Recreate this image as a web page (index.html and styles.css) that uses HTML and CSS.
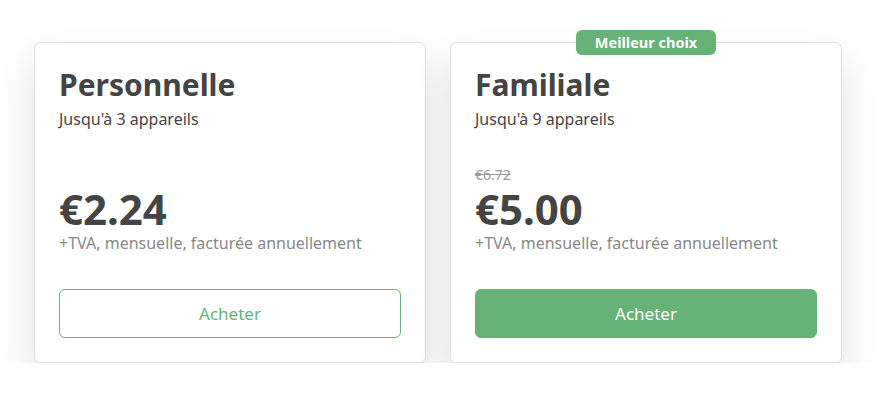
FILE: index.html
```
<!DOCTYPE html>
<html lang="fr">
<head>
<meta charset="utf-8">
<link rel="stylesheet" href="styles.css">
</head>
<body>
<div class="plans">
  <div class="card">
    <h2 class="title">Personnelle</h2>
    <p class="devices">Jusqu'à 3 appareils</p>
    <div class="pricing">
      <div class="price">€2.24</div>
      <div class="note">+TVA, mensuelle, facturée annuellement</div>
    </div>
    <button class="btn btn-outline">Acheter</button>
  </div>
  <div class="card">
    <div class="badge">Meilleur choix</div>
    <h2 class="title">Familiale</h2>
    <p class="devices">Jusqu'à 9 appareils</p>
    <div class="pricing">
      <div class="old">€6.72</div>
      <div class="price">€5.00</div>
      <div class="note">+TVA, mensuelle, facturée annuellement</div>
    </div>
    <button class="btn btn-fill">Acheter</button>
  </div>
</div>
</body>
</html>
```
FILE: styles.css
```
html, body {
  margin: 0;
  background: #fff;
}
body {
  font-family: "Noto Sans", "Liberation Sans", sans-serif;
  color: #444;
}
.plans {
  display: flex;
  gap: 24px;
  padding: 42px 0 0 34px;
}
.card {
  position: relative;
  box-sizing: border-box;
  width: 392px;
  height: 321px;
  border: 1px solid #dedede;
  border-radius: 6px;
  background: #fff;
  box-shadow: 0 20px 40px rgba(0, 0, 0, 0.12);
  padding: 22px 24px 24px;
  display: flex;
  flex-direction: column;
}
.badge {
  position: absolute;
  top: -13px;
  left: 50%;
  transform: translateX(-50%);
  width: 140px;
  height: 25px;
  line-height: 25px;
  text-align: center;
  background: #66b277;
  color: #fff;
  font-size: 14.5px;
  font-weight: 700;
  border-radius: 6px;
}
.title {
  margin: 0;
  font-size: 30px;
  line-height: 40px;
  font-weight: 700;
  color: #444;
}
.devices {
  margin: 4px 0 0;
  font-size: 16px;
  line-height: 20px;
  color: #444;
}
.pricing {
  margin-top: auto;
}
.old {
  font-size: 14px;
  line-height: 19px;
  color: #999;
  text-decoration: line-through;
  margin-bottom: 1px;
}
.price {
  font-size: 42px;
  line-height: 48px;
  font-weight: 700;
  color: #444;
}
.note {
  font-size: 16px;
  line-height: 20px;
  color: #888;
}
.btn {
  margin-top: 36px;
  width: 100%;
  height: 49px;
  flex-shrink: 0;
  border-radius: 6px;
  font-family: inherit;
  font-size: 17px;
  cursor: pointer;
}
.btn-outline {
  background: #fff;
  border: 1px solid #6db37c;
  color: #66b277;
}
.btn-fill {
  background: #66b277;
  border: 1px solid #66b277;
  color: #fff;
}
```
